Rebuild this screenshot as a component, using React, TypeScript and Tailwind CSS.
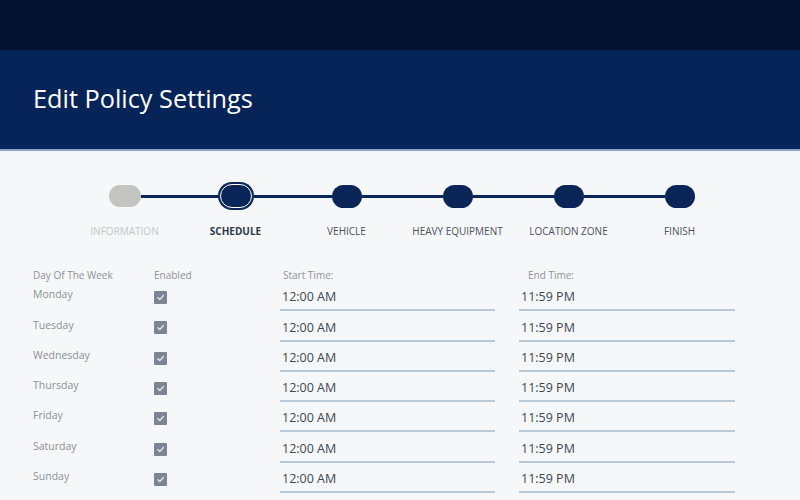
import React from 'react'

const steps = ['Information', 'Schedule', 'Vehicle', 'Heavy Equipment', 'Location Zone', 'Finish']
const days = ['Monday', 'Tuesday', 'Wednesday', 'Thursday', 'Friday', 'Saturday', 'Sunday']

const Dot: React.FC<{ index: number }> = ({ index }) => {
  if (index === 0) return <div className="h-[22px] w-[32px] shrink-0 rounded-full bg-[#c3c4bf]" />
  if (index === 1)
    return (
      <div className="h-[28px] w-[36px] shrink-0 rounded-full bg-[#0a2658] p-[2px]">
        <div className="h-full w-full rounded-full border-[1.5px] border-white bg-[#0a2658]" />
      </div>
    )
  return <div className="h-[23px] w-[30px] shrink-0 rounded-full bg-[#0a2658]" />
}

const Stepper: React.FC = () => (
  <div className="grid grid-cols-[repeat(6,111px)] pl-[69px] pt-[31px]">
    {steps.map((step, i) => (
      <div key={step} className="flex flex-col items-center">
        <div className="flex h-[28px] w-full items-center">
          <div className={`h-[3px] flex-1 ${i === 0 ? '' : 'bg-[#0a2658]'}`} />
          <Dot index={i} />
          <div className={`h-[3px] flex-1 ${i === steps.length - 1 ? '' : 'bg-[#0a2658]'}`} />
        </div>
        <span
          className={`mt-[15px] whitespace-nowrap text-[10px] uppercase leading-[12px] ${
            i === 0 ? 'text-[#c3c6ca]' : i === 1 ? 'font-bold text-[#2f3846]' : 'text-[#4a5260]'
          }`}
        >
          {step}
        </span>
      </div>
    ))}
  </div>
)

const CheckBox: React.FC = () => (
  <div className="flex h-[13px] w-[13px] items-center justify-center rounded-[1px] bg-[#7b8594]">
    <svg width="9" height="9" viewBox="0 0 10 10" fill="none">
      <path d="M2 5.2 L4.2 7.3 L8.2 2.8" stroke="#e8edf3" strokeWidth="1.4" strokeLinecap="round" strokeLinejoin="round" />
    </svg>
  </div>
)

const TimeField: React.FC<{ value: string; width: string }> = ({ value, width }) => (
  <div className={`flex h-full ${width} items-end border-b-2 border-[#b5c9d9] pb-[3px] pl-[2px]`}>
    <span className="text-[12.5px] leading-[18px] text-[#3c4655]">{value}</span>
  </div>
)

const App: React.FC = () => {
  return (
    <div className="h-[500px] w-[800px] overflow-hidden bg-[#f6f7f8] font-['Open_Sans',sans-serif]">
      <div className="h-[50px] bg-[#03122f]" />
      <div className="flex h-[101px] items-center border-b-[2px] border-[#8ea2c6] bg-[#062457] pl-[33px]">
        <h1 className="pb-[1px] text-[25.3px] font-medium text-white">Edit Policy Settings</h1>
      </div>
      <Stepper />
      <div className="pl-[33px] pt-[32px]">
        <div className="grid h-[12px] grid-cols-[121px_126px_242px_216px] text-[10px] leading-[12px] text-[#8d929a]">
          <span>Day Of The Week</span>
          <span>Enabled</span>
          <span className="pl-[3px]">Start Time:</span>
          <span className="pl-[6px]">End Time:</span>
        </div>
        {days.map((day) => (
          <div key={day} className="grid h-[30.3px] grid-cols-[121px_126px_239px_216px]">
            <div className="flex items-center pb-[2px] text-[10.5px] text-[#8a8f98]">{day}</div>
            <div className="flex items-center pt-[3px]">
              <CheckBox />
            </div>
            <TimeField value="12:00 AM" width="w-[215px]" />
            <TimeField value="11:59 PM" width="w-[216px]" />
          </div>
        ))}
      </div>
    </div>
  )
}

export default App
